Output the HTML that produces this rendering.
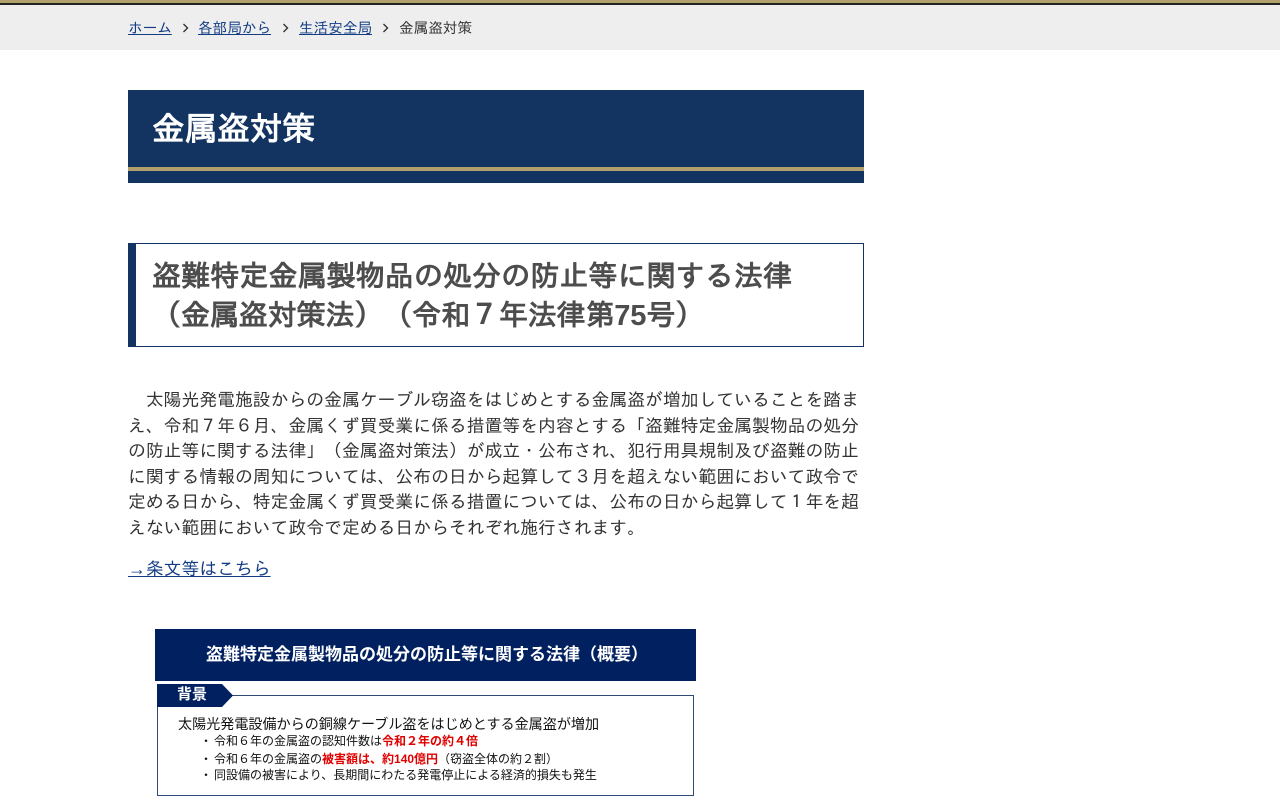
<!DOCTYPE html>
<html lang="ja"><head><meta charset="utf-8"><title>金属盗対策</title>
<style>
html,body{margin:0;padding:0;background:#fff;width:1280px;height:800px;overflow:hidden}
body{font-family:"Liberation Sans","IPAGothic",sans-serif;color:#333;position:relative}
.top{position:absolute;left:0;top:0;width:1280px;height:3px;background:#b1a06b;border-bottom:2px solid #222}
.crumb{position:absolute;left:0;top:5px;width:1280px;height:45px;background:#eee;font-size:14.6px;line-height:48px}
.crumb span,.crumb a{position:absolute;top:0;white-space:nowrap}
a{color:#123d84;text-decoration:underline}
.h1{position:absolute;left:128px;top:90px;width:736px;height:77px;background:#133360;border-bottom:16px solid #133360}
.h1:after{content:"";position:absolute;left:0;right:0;top:77px;height:4px;background:#b1a06b}
.h1 b{position:absolute;left:24px;top:18px;font-size:32.6px;line-height:42px;color:#fff;white-space:nowrap}
.h2{position:absolute;left:128px;top:243px;width:727px;height:102px;border:1px solid #133360;border-left:8px solid #133360}
.h2 b{position:absolute;left:16px;white-space:nowrap;font-size:29.1px;line-height:40px;color:#4d4d4d}
.p{position:absolute;left:128px;top:388px;width:736px;font-size:17.83px;line-height:25.6px;white-space:nowrap}
.link{position:absolute;left:128px;top:556px;font-size:17.83px;line-height:26px;white-space:nowrap}
.fig{position:absolute;left:155px;top:629px;width:541px;height:171px;filter:blur(.25px);color:#111;font-family:"Liberation Sans","Noto Sans CJK JP",sans-serif}
.fig div,.fig svg{position:absolute;white-space:nowrap}
.r{color:#e00000;font-weight:bold}
.s{font-size:12px;line-height:18px}
</style></head><body>
<div class="top"></div>
<div class="crumb">
<a href="#" style="left:128px">ホーム</a><span style="left:182px">
<svg width="8" height="10" viewBox="0 0 8 10"><path d="M1.5 1l4 4-4 4" fill="none" stroke="#333" stroke-width="1.4"/></svg></span>
<a href="#" style="left:198px">各部局から</a><span style="left:282px">
<svg width="8" height="10" viewBox="0 0 8 10"><path d="M1.5 1l4 4-4 4" fill="none" stroke="#333" stroke-width="1.4"/></svg></span>
<a href="#" style="left:299px">生活安全局</a><span style="left:382px">
<svg width="8" height="10" viewBox="0 0 8 10"><path d="M1.5 1l4 4-4 4" fill="none" stroke="#333" stroke-width="1.4"/></svg></span>
<span style="left:399px">金属盗対策</span>
</div>
<div class="h1"><b>金属盗対策</b></div>
<div class="h2"><b style="top:13px">盗難特定金属製物品の処分の防止等に関する法律</b><b style="top:52px;letter-spacing:-.2px">（金属盗対策法）（令和７年法律第75号）</b></div>
<div class="p">　太陽光発電施設からの金属ケーブル窃盗をはじめとする金属盗が増加していることを踏ま<br>え、令和７年６月、金属くず買受業に係る措置等を内容とする「盗難特定金属製物品の処分<br>の防止等に関する法律」（金属盗対策法）が成立・公布され、犯行用具規制及び盗難の防止<br>に関する情報の周知については、公布の日から起算して３月を超えない範囲において政令で<br>定める日から、特定金属くず買受業に係る措置については、公布の日から起算して１年を超<br>えない範囲において政令で定める日からそれぞれ施行されます。</div>
<div class="link"><a href="#">→条文等はこちら</a></div>
<div class="fig">
<svg style="left:0;top:0" width="541" height="171" viewBox="0 0 541 171">
<rect x="0" y="0" width="541" height="52" fill="#002060"/>
<rect x="2.5" y="66.5" width="536" height="100" fill="#fff" stroke="#2f4a78" stroke-width="1"/>
<path d="M2 55H67L78 66.5 67 78H2Z" fill="#002060"/>
</svg>
<div style="left:51px;top:15px;font-size:17px;line-height:22px;font-weight:bold;color:#fff">盗難特定金属製物品の処分の防止等に関する法律（概要）</div>
<div style="left:22px;top:56px;font-size:15px;line-height:20px;font-weight:bold;color:#fff">背景</div>
<div style="left:23px;top:85px;font-size:14.08px;line-height:20px">太陽光発電設備からの銅線ケーブル盗をはじめとする金属盗が増加</div>
<div class="s" style="left:45px;top:103px">・</div>
<div class="s" style="left:59px;top:103px">令和６年の金属盗の認知件数は<span class="r">令和２年の約４倍</span></div>
<div class="s" style="left:45px;top:121px">・</div>
<div class="s" style="left:59px;top:121px">令和６年の金属盗の<span class="r">被害額は、約140億円</span>（窃盗全体の約２割）</div>
<div class="s" style="left:45px;top:137px">・</div>
<div class="s" style="left:59px;top:137px">同設備の被害により、長期間にわたる発電停止による経済的損失も発生</div>
</div>
</body></html>
